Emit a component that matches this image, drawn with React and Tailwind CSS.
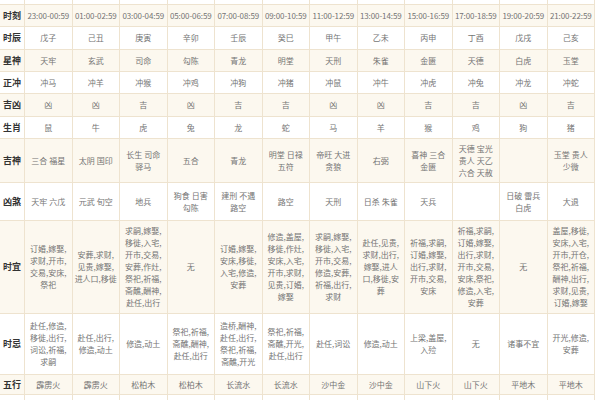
const times = ["23:00-00:59", "01:00-02:59", "03:00-04:59", "05:00-06:59", "07:00-08:59", "09:00-10:59", "11:00-12:59", "13:00-14:59", "15:00-16:59", "17:00-18:59", "19:00-20:59", "21:00-22:59"];

const rows = [
    { label: "", h: "h-[5px]", bg: "bg-white", cells: Array(12).fill("") },
    { label: "时刻", h: "h-[22px]", bg: "bg-[#fcf8ef]", cells: times, time: true },
    { label: "时辰", h: "h-[23px]", bg: "bg-white", cells: ["戊子", "己丑", "庚寅", "辛卯", "壬辰", "癸巳", "甲午", "乙未", "丙申", "丁酉", "戊戌", "己亥"] },
    { label: "星神", h: "h-[22px]", bg: "bg-[#fcf8ef]", cells: ["天牢", "玄武", "司命", "勾陈", "青龙", "明堂", "天刑", "朱雀", "金匮", "天德", "白虎", "玉堂"] },
    { label: "正冲", h: "h-[22px]", bg: "bg-white", cells: ["冲马", "冲羊", "冲猴", "冲鸡", "冲狗", "冲猪", "冲鼠", "冲牛", "冲虎", "冲兔", "冲龙", "冲蛇"] },
    { label: "吉凶", h: "h-[23px]", bg: "bg-[#fcf8ef]", cells: ["凶", "凶", "吉", "凶", "吉", "吉", "凶", "凶", "吉", "吉", "凶", "吉"] },
    { label: "生肖", h: "h-[22px]", bg: "bg-white", cells: ["鼠", "牛", "虎", "兔", "龙", "蛇", "马", "羊", "猴", "鸡", "狗", "猪"] },
    {
        label: "吉神", h: "h-[44px]", bg: "bg-[#fcf8ef]",
        cells: ["三合 福星", "太阴 国印", "长生 司命 驿马", "五合", "青龙", "明堂 日禄 五符", "帝旺 大进 贪狼", "右弼", "喜神 三合 金匮", "天德 宝光 贵人 天乙 六合 天赦", "", "玉堂 贵人 少微"],
    },
    {
        label: "凶煞", h: "h-[38px]", bg: "bg-white",
        cells: ["天牢 六戊", "元武 旬空", "地兵", "狗食 日害 勾陈", "建刑 不遇 路空", "路空", "天刑", "日杀 朱雀", "天兵", "", "日破 雷兵 白虎", "大退"],
    },
    {
        label: "时宜", h: "h-[93px]", bg: "bg-[#fcf8ef]",
        cells: [
            "订婚,嫁娶,求财,开市,交易,安床,祭祀",
            "安葬,求财,见贵,嫁娶,进人口,移徙",
            "求嗣,嫁娶,移徙,入宅,开市,交易,安葬,作灶,祭祀,祈福,斋醮,酬神,赴任,出行",
            "无",
            "订婚,嫁娶,安床,移徙,入宅,修造,安葬",
            "修造,盖屋,移徙,作灶,安床,入宅,开市,求财,见贵,订婚,嫁娶",
            "求嗣,嫁娶,移徙,入宅,开市,交易,修造,安葬,祈福,出行,求财",
            "赴任,见贵,求财,出行,嫁娶,进人口,移徙,安葬",
            "祈福,求嗣,订婚,嫁娶,出行,求财,开市,交易,安床",
            "祈福,求嗣,订婚,嫁娶,出行,求财,开市,交易,安床,祭祀,修造,入宅,安葬",
            "无",
            "盖屋,移徙,安床,入宅,开市,开仓,祭祀,祈福,酬神,出行,求财,见贵,订婚,嫁娶",
        ],
    },
    {
        label: "时忌", h: "h-[61px]", bg: "bg-white",
        cells: [
            "赴任,修造,移徙,出行,词讼,祈福,求嗣",
            "赴任,出行,修造,动土",
            "修造,动土",
            "祭祀,祈福,斋醮,酬神,赴任,出行",
            "造桥,酬神,赴任,出行,祭祀,祈福,斋醮,开光",
            "祭祀,祈福,斋醮,开光,赴任,出行",
            "赴任,词讼",
            "修造,动土",
            "上梁,盖屋,入殓",
            "无",
            "诸事不宜",
            "开光,修造,安葬",
        ],
    },
    { label: "五行", h: "h-[20px]", bg: "bg-[#fcf8ef]", cells: ["霹雳火", "霹雳火", "松柏木", "松柏木", "长流水", "长流水", "沙中金", "沙中金", "山下火", "山下火", "平地木", "平地木"] },
    { label: "", h: "h-[10px]", bg: "bg-white", cells: Array(12).fill("") },
];

const App = () => {
    return (
        <div className="w-[600px] h-[400px] overflow-hidden bg-white text-[#747474] font-['Noto_Sans_CJK_SC',sans-serif]">
            <div className="w-[595px] flex flex-col">
                {rows.map((row, i) => (
                    <div key={i} className={`grid grid-cols-[25px_repeat(12,minmax(0,1fr))] shrink-0 ${row.h} ${row.bg}`}>
                        <div className="flex items-center justify-center border-r border-b border-[#eee3cf] text-[9px] font-bold text-[#333] leading-[12px]">
                            {row.label}
                        </div>
                        {row.cells.map((c, j) => (
                            <div key={j} className="flex items-center justify-center border-r border-b border-[#eee3cf] overflow-hidden">
                                <div className={`w-[43px] text-center leading-[12px] ${row.time ? "text-[8px] whitespace-nowrap tracking-[-0.1px]" : "text-[8px]"}`}>
                                    {c}
                                </div>
                            </div>
                        ))}
                    </div>
                ))}
            </div>
        </div>
    );
};

export default App;
